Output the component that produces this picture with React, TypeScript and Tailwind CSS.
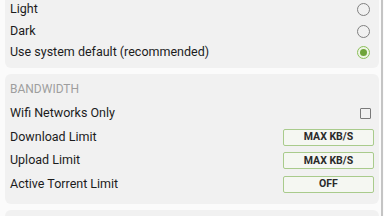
import React from 'react';

const THEMES = [
  { id: 'light', label: 'Light', checked: false },
  { id: 'dark', label: 'Dark', checked: false },
  { id: 'system', label: 'Use system default (recommended)', checked: true },
];

const LIMITS = [
  { id: 'download', label: 'Download Limit', value: 'MAX KB/S' },
  { id: 'upload', label: 'Upload Limit', value: 'MAX KB/S' },
  { id: 'torrents', label: 'Active Torrent Limit', value: 'OFF' },
];

function Radio({ checked }: { checked: boolean }) {
  return (
    <div
      className={`flex h-[13px] w-[13px] items-center justify-center rounded-full border ${
        checked ? 'border-[#8cbf5a] bg-[#eef5e6]' : 'border-[#808080]'
      }`}
    >
      {checked && <div className="h-[7px] w-[7px] rounded-full bg-[#6fa43a]" />}
    </div>
  );
}

function LimitButton({ value }: { value: string }) {
  return (
    <button className="flex h-[17px] w-[91px] items-center justify-center rounded-[2px] border-[1.5px] border-[#a9cb8c] bg-[#f5f7f2] text-[10.5px] font-bold text-[#2a2a2a]">
      {value}
    </button>
  );
}

export default function App() {
  return (
    <div className="flex h-[216px] w-[384px] overflow-hidden bg-[#fbfbfb] font-['Roboto',sans-serif] text-[12.5px] text-[#1c1c1c]">
      <div className="flex flex-1 flex-col gap-[6px] pl-[5px] pr-[2px]">
        {/* Theme */}
        <div className="-mt-[1px] rounded-b-[6px] bg-[#f1f1f1] pb-[4.5px]">
          {THEMES.map(theme => (
            <div key={theme.id} className="flex h-[21.5px] items-center justify-between pl-[5px] pr-[9px]">
              <span>{theme.label}</span>
              <Radio checked={theme.checked} />
            </div>
          ))}
        </div>

        {/* Bandwidth */}
        <div className="rounded-[6px] bg-[#f1f1f1] pb-[8px]">
          <div className="mb-[6px] box-content flex h-[14px] items-center pl-[5px] pt-[8px] text-[12px] text-[#9e9e9e]">
            BANDWIDTH
          </div>
          <div className="flex h-[23.5px] items-center justify-between pl-[5px] pr-[8px]">
            <span>Wifi Networks Only</span>
            <div className="h-[11px] w-[11px] rounded-[1px] border border-[#7a7a7a]" />
          </div>
          {LIMITS.map(limit => (
            <div key={limit.id} className="flex h-[23.5px] items-center justify-between pl-[5px] pr-[5px]">
              <span>{limit.label}</span>
              <LimitButton value={limit.value} />
            </div>
          ))}
        </div>

        <div className="h-[20px] rounded-t-[6px] bg-[#f1f1f1]" />
      </div>

      {/* Scrollbar */}
      <div className="mr-[1px] w-[2px] bg-[#c4c4c4]" />
    </div>
  );
}
